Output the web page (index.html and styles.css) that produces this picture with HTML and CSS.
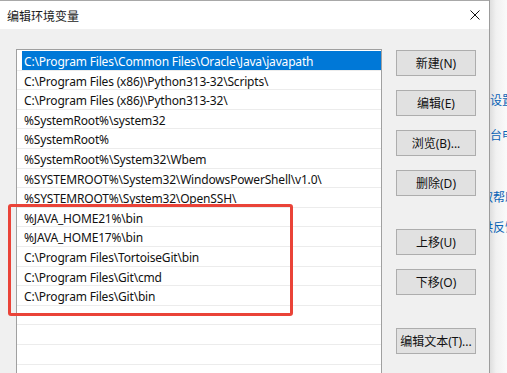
FILE: index.html
```html
<!DOCTYPE html>
<html lang="zh-CN">
<head>
    <meta charset="UTF-8">
    <title>编辑环境变量</title>
    <link rel="stylesheet" href="styles.css">
</head>
<body>
    <div class="screen">
        <div class="dialog">
            <div class="titlebar">
                <span class="title">编辑环境变量</span>
                <svg class="close" width="10" height="10" viewBox="0 0 10 10">
                    <path d="M0.5 0.5 L9.5 9.5 M9.5 0.5 L0.5 9.5" stroke="#111" stroke-width="1" fill="none"/>
                </svg>
            </div>
            <div class="content">
                <div class="pathlist">
                    <div class="row selected"><span>C:\Program Files\Common Files\Oracle\Java\javapath</span></div>
                    <div class="row"><span>C:\Program Files (x86)\Python313-32\Scripts\</span></div>
                    <div class="row"><span>C:\Program Files (x86)\Python313-32\</span></div>
                    <div class="row"><span>%SystemRoot%\system32</span></div>
                    <div class="row"><span>%SystemRoot%</span></div>
                    <div class="row"><span>%SystemRoot%\System32\Wbem</span></div>
                    <div class="row"><span>%SYSTEMROOT%\System32\WindowsPowerShell\v1.0\</span></div>
                    <div class="row"><span>%SYSTEMROOT%\System32\OpenSSH\</span></div>
                    <div class="row"><span>%JAVA_HOME21%\bin</span></div>
                    <div class="row"><span>%JAVA_HOME17%\bin</span></div>
                    <div class="row"><span>C:\Program Files\TortoiseGit\bin</span></div>
                    <div class="row"><span>C:\Program Files\Git\cmd</span></div>
                    <div class="row"><span>C:\Program Files\Git\bin</span></div>
                    <div class="row"><span>&nbsp;</span></div>
                    <div class="row"><span>&nbsp;</span></div>
                    <div class="row"><span>&nbsp;</span></div>
                    <div class="row"><span>&nbsp;</span></div>
                </div>
                <div class="buttons">
                    <button>新建(N)</button>
                    <button>编辑(E)</button>
                    <button>浏览(B)...</button>
                    <button>删除(D)</button>
                    <button class="spaced">上移(U)</button>
                    <button>下移(O)</button>
                    <button class="spaced">编辑文本(T)...</button>
                </div>
            </div>
        </div>
        <div class="behind">
            <span class="link first">设置</span>
            <span class="link second">台申</span>
            <span class="link third cut">取帮助</span>
            <span class="link fourth cut">供反馈</span>
        </div>
        <!-- annotation frame -->
        <div class="mark"></div>
    </div>
</body>
</html>
```

FILE: styles.css
```css
body {
    margin: 0;
    width: 507px;
    height: 373px;
    overflow: hidden;
    background-color: #f5f5f5;
    font-family: "Noto Sans", "Noto Sans CJK SC", sans-serif;
    font-size: 12px;
    color: #000;
}
.screen {
    position: relative;
    display: flex;
    height: 373px;
}
.dialog {
    width: 489px;
    flex: none;
    border-right: 1px solid #9c9c9c;
    display: flex;
    flex-direction: column;
    background-color: #f0f0f0;
}
.titlebar {
    height: 28px;
    border-top: 1px solid #a8a8a8;
    background-color: #fff;
    display: flex;
    align-items: center;
    justify-content: space-between;
    padding: 0 9px 0 7px;
}
.title {
    font-family: "Noto Sans CJK SC", sans-serif;
    font-size: 12px;
    color: #1a1a1a;
}
.close {
    display: block;
}
.content {
    flex: 1;
    display: flex;
    padding: 20px 13px 0 16px;
    overflow: hidden;
}
.pathlist {
    width: 366px;
    height: 360px;
    flex: none;
    box-sizing: border-box;
    border: 1px solid #a0a0a0;
    background-color: #fff;
    padding-top: 1px;
    overflow: hidden;
}
.row {
    height: 19.6px;
    box-sizing: border-box;
    border-bottom: 1px solid #ececec;
    padding-left: 5px;
}
.row span {
    display: block;
    height: 100%;
    box-sizing: border-box;
    padding: 2px 0 0 2px;
    line-height: 17px;
    letter-spacing: -0.18px;
    white-space: nowrap;
    color: #111;
}
.row.selected span {
    background-color: #0078d7;
    color: #fff;
}
.buttons {
    margin-left: 14px;
    margin-top: 1px;
    display: flex;
    flex-direction: column;
    gap: 14px;
}
.buttons button {
    width: 80px;
    height: 26px;
    padding: 0;
    background-color: #e1e1e1;
    border: 1px solid #adadad;
    border-radius: 0;
    font-family: "Noto Sans", "Noto Sans CJK SC", sans-serif;
    font-size: 12px;
    color: #111;
}
.buttons .spaced {
    margin-top: 19px;
}
.behind {
    flex: 1;
    overflow: hidden;
    display: flex;
    flex-direction: column;
    background: linear-gradient(to right, #dedede, #f1f1f1 6px, #fafafa);
}
.link {
    font-family: "Noto Sans CJK SC", sans-serif;
    font-size: 12px;
    line-height: 20px;
    color: #0a63b5;
    white-space: nowrap;
}
.link.first { margin-top: 90px; }
.link.second { margin-top: 15px; }
.link.third { margin-top: 42px; }
.link.fourth { margin-top: 10px; }
.link.cut { margin-left: -9px; }
.mark {
    position: absolute;
    left: 8px;
    top: 204px;
    width: 285px;
    height: 112px;
    box-sizing: border-box;
    border: 3px solid #ea4338;
    border-radius: 3px;
}
```
